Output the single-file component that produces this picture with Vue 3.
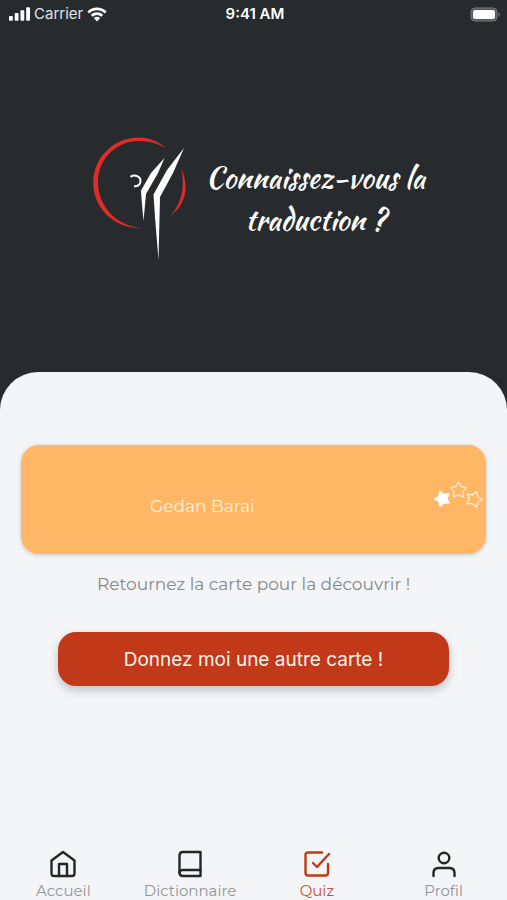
<script setup>
const tabs = [
  { id: 'home', label: 'Accueil' },
  { id: 'book', label: 'Dictionnaire' },
  { id: 'quiz', label: 'Quiz' },
  { id: 'user', label: 'Profil' },
]
const active = 'quiz'
const starPath = 'M0 -8 L2.8 -3.4 L7.9 -2.4 L4.5 1.6 L5 6.8 L0 5 L-5 6.8 L-4.5 1.6 L-7.9 -2.4 L-2.8 -3.4 Z'
</script>

<template>
  <div class="screen">
    <div class="status">
      <div class="carrier">
        <svg class="signal" viewBox="0 0 22 14" aria-hidden="true">
          <rect x="0" y="9" width="4" height="5" rx="1" />
          <rect x="6" y="6" width="4" height="8" rx="1" />
          <rect x="12" y="3" width="4" height="11" rx="1" />
          <rect x="18" y="0" width="4" height="14" rx="1" />
        </svg>
        <span>Carrier</span>
        <svg class="wifi" viewBox="0 0 20 15" aria-hidden="true">
          <path d="M1.3 5.4 A12.5 12.5 0 0 1 18.7 5.4" />
          <path d="M4.7 8.7 A7.8 7.8 0 0 1 15.3 8.7" />
          <path class="dot" d="M6.8 11 A4.6 4.6 0 0 1 13.2 11 L10 14.4 Z" />
        </svg>
      </div>
      <span class="time">9:41 AM</span>
      <svg class="battery" viewBox="0 0 31 15" aria-hidden="true">
        <rect class="shell" x="1" y="1" width="26" height="13" rx="4" />
        <rect class="charge" x="3" y="3" width="22" height="9" rx="2" />
        <path class="cap" d="M28.5 5 Q31 7.5 28.5 10 Z" />
      </svg>
    </div>

    <header class="hero">
      <svg class="logo" viewBox="12 11 96 125" aria-hidden="true">
        <path class="red" d="M86.5 23 C77 16 69 12.5 59 12.5 C33 12.5 13.3 33 13.3 58 C13.3 83 34 104 62 103 C37 101 18 82 18 57 C18 34 36 16 59 16 C69 16 77 18.5 86.5 23 Z" />
        <path class="red" d="M101.5 44 C109 60 107 80 89 92 C102 79 105 62 101.5 44 Z" />
        <path class="curl" d="M50.5 51.8 C55 49 60.5 51.5 60.5 56 C60.5 59.5 57.5 61.7 54 61.3" />
        <path d="M84.5 33 L71 48 L61 65.5 L61.5 74 L63.5 96 L66 69 L78 48 Z" />
        <path d="M104 23 L87 45 L73.5 69.5 L75 92 L78.5 135 L80 72 L93 48 Z" />
      </svg>
      <h1>Connaissez-vous la traduction ?</h1>
    </header>

    <main class="panel">
      <button class="card" type="button">
        <span class="word">Gedan Barai</span>
        <svg class="stars" viewBox="0 0 50 28" aria-hidden="true">
          <path class="full" :d="starPath" transform="translate(8.5 17.5) rotate(-20) scale(.96)" />
          <path :d="starPath" transform="translate(24.5 9)" />
          <path :d="starPath" transform="translate(40 18) rotate(20)" />
        </svg>
      </button>
      <p class="hint">Retournez la carte pour la découvrir !</p>
      <button class="next" type="button">Donnez moi une autre carte !</button>
    </main>

    <nav class="tabs">
      <a v-for="tab in tabs" :key="tab.id" href="#" :class="{ active: tab.id === active }">
        <svg viewBox="0 0 28 28" aria-hidden="true">
          <g v-if="tab.id === 'home'">
            <path d="M14 2 L25.5 10.5 V23.5 Q25.5 26 23 26 H5 Q2.5 26 2.5 23.5 V10.5 Z" />
            <path d="M10 26 V14 H18 V26" />
          </g>
          <g v-else-if="tab.id === 'book'">
            <path d="M24.5 26 V2 H7 Q3.5 2 3.5 5.5 V22.5 Q3.5 26 7 26 Z" />
            <path d="M3.5 22.5 Q3.5 20 7 20 H24.5" />
          </g>
          <g v-else-if="tab.id === 'quiz'">
            <path d="M19 2.5 H5 Q2.5 2.5 2.5 5 V23 Q2.5 25.5 5 25.5 H22.5 Q25 25.5 25 23 V14" />
            <path d="M10 13 L14 17 L26 4" />
          </g>
          <g v-else>
            <circle cx="14" cy="8" r="5.3" />
            <path d="M3.5 26 V23 Q3.5 18 8.5 18 H19.5 Q24.5 18 24.5 23 V26" />
          </g>
        </svg>
        <span>{{ tab.label }}</span>
      </a>
    </nav>
  </div>
</template>

<style>
body {
  margin: 0;
  background: #f3f5f7;
}
</style>

<style scoped>
.screen {
  display: flex;
  flex-direction: column;
  min-height: 100vh;
  background: linear-gradient(#272b2e 440px, #f3f5f7 440px);
  font-family: Montserrat, "Open Sans", sans-serif;
}

.status {
  display: grid;
  grid-template-columns: 1fr auto 1fr;
  align-items: center;
  height: 28px;
  padding: 0 6px 0 9px;
  color: #fff;
  font: 15px/20px Inter, sans-serif;
}

.carrier {
  display: flex;
  align-items: center;
  gap: 4px;
  color: #e2e4e5;
}

.status svg { fill: #fff; }
.signal { width: 21px; height: 14px; }
.wifi { width: 20px; height: 15px; }
.wifi path { fill: none; stroke: #fff; stroke-width: 2.8; }
.wifi .dot { fill: #fff; stroke: none; }
.time { font-weight: 600; }
.battery { width: 31px; height: 15px; justify-self: end; }
.battery .shell { fill: #55585b; stroke: #77797c; }
.battery .cap { fill: #77797c; }

.hero {
  display: flex;
  align-items: center;
  justify-content: center;
  gap: 11px;
  height: 344px;
  padding: 0 74px 3px 91px;
  box-sizing: border-box;
}

.logo {
  flex: none;
  width: 96px;
  height: 125px;
  fill: #fff;
}
.logo .red { fill: #e02b28; }
.logo .curl { fill: none; stroke: #fff; stroke-width: 2; }

h1 {
  width: 234px;
  margin: 0;
  color: #fff;
  font: 400 29px/42px "Kaushan Script", Lato, cursive;
  text-align: center;
}

.panel {
  display: flex;
  flex-direction: column;
  align-items: center;
  flex: 1;
  padding: 73px 21px 24px;
  border-radius: 38px 38px 0 0;
  background: #f3f5f7;
}

button {
  border: 0;
  font-family: inherit;
  cursor: pointer;
}

.card {
  display: flex;
  align-items: center;
  justify-content: space-between;
  width: 100%;
  height: 109px;
  padding: 0 2px 0 129px;
  border-radius: 18px;
  background: #ffb665;
  box-shadow: 0 1px 4px rgba(40, 50, 70, 0.22);
}

.word {
  padding-top: 12px;
  color: #fff0dd;
  font-size: 17px;
  line-height: 24px;
}

.stars {
  width: 50px;
  height: 28px;
  margin-bottom: 10px;
  fill: none;
  stroke: #fff0dc;
  stroke-width: 1.3;
  stroke-linejoin: round;
}
.stars .full { fill: #fff; stroke: #fff; }

.hint {
  margin: 18px 0 36px;
  color: #86888d;
  font-size: 17px;
  line-height: 24px;
}

.next {
  width: 84%;
  height: 54px;
  padding: 2px 0 0;
  border-radius: 18px;
  background: #c2391a;
  box-shadow: 0 4px 8px rgba(30, 40, 55, 0.25);
  color: #fff0ea;
  font: 19px/24px Inter, sans-serif;
}

.tabs {
  display: grid;
  grid-template-columns: repeat(4, 1fr);
  background: #f3f5f7;
}

.tabs a {
  display: flex;
  flex-direction: column;
  align-items: center;
  gap: 4px;
  color: #929498;
  font-size: 15px;
  line-height: 18px;
  text-decoration: none;
}

.tabs svg {
  width: 28px;
  height: 28px;
  fill: none;
  stroke: #242729;
  stroke-width: 2.4;
  stroke-linecap: round;
  stroke-linejoin: round;
}

.tabs .active { color: #cb5238; }
.tabs .active svg { stroke: #c2391a; }
</style>
